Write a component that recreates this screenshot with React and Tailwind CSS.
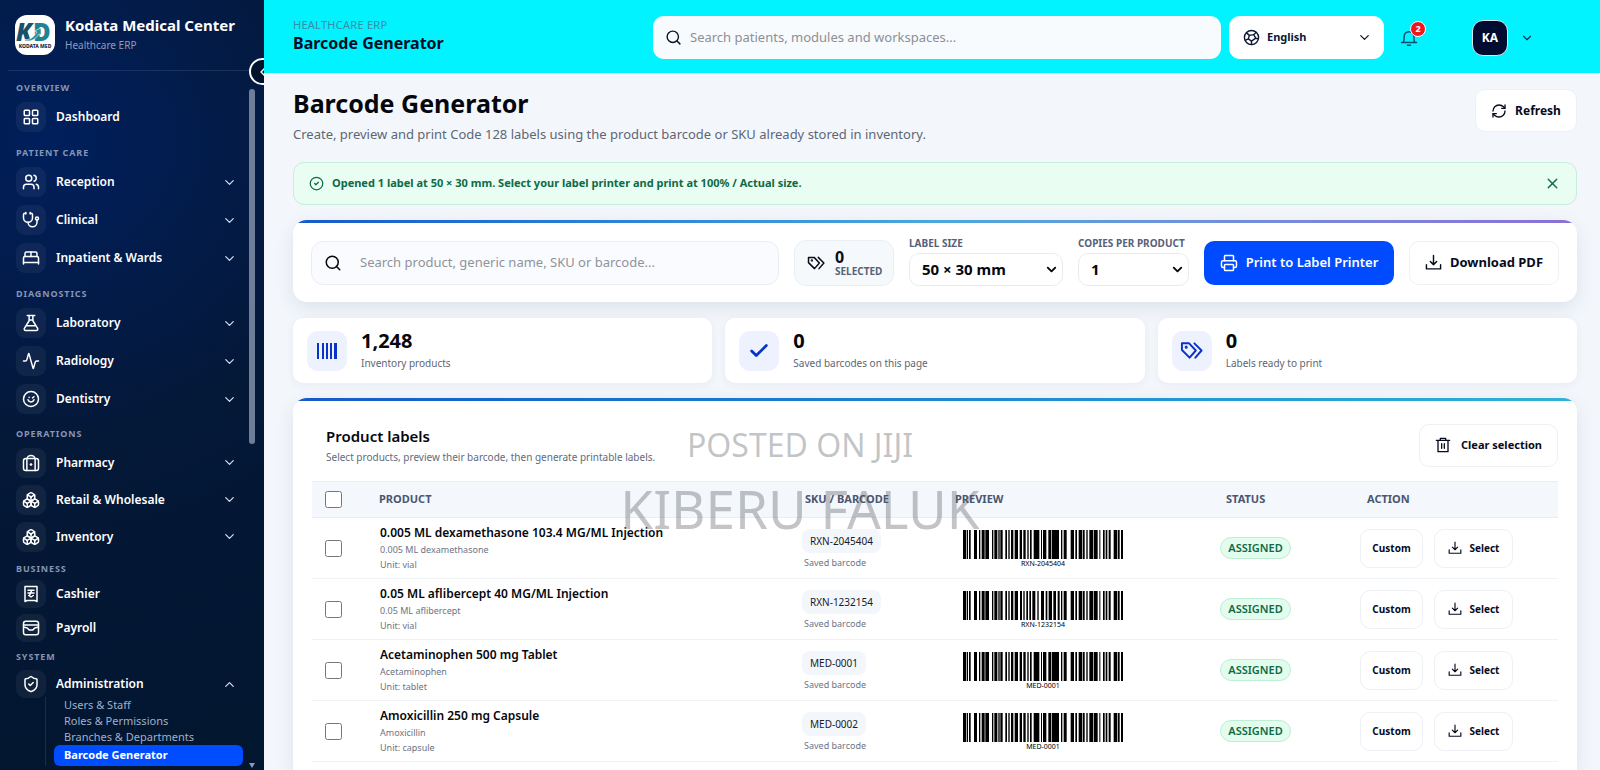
import React from 'react';
import {
    Activity, BedDouble, Boxes, Check, ChevronDown, ChevronLeft, ChevronUp, CircleCheck,
    LayoutGrid, Printer, RefreshCw, Search, ShieldCheck, Stethoscope, Users, X,
} from 'lucide-react';

const Svg = ({ size = 18, strokeWidth = 2, className, children }) => (
    <svg width={size} height={size} viewBox="0 0 24 24" fill="none" stroke="currentColor" strokeWidth={strokeWidth} strokeLinecap="round" strokeLinejoin="round" className={className} aria-hidden="true">
        {children}
    </svg>
);

const FlaskIcon = (props) => (
    <Svg {...props}>
        <path d="M7 2h10M9.5 2v7L3.2 19.2A1.9 1.9 0 0 0 4.8 22h14.4a1.9 1.9 0 0 0 1.6-2.8L14.5 9V2M9.5 8h5M6.5 15.5h11" />
    </Svg>
);

const FaceIcon = (props) => (
    <Svg {...props}>
        <circle cx="12" cy="12" r="10" />
        <path d="M8 13a4.2 4.2 0 0 0 8 0M9.5 9.5v.5M14 10.5l2-1.5" />
    </Svg>
);

const ReceiptIcon = (props) => (
    <Svg {...props}>
        <path d="M4 2h16v20l-3-1.500h-10L4 22z" />
        <path d="M8 7h8M8 10.500h8M9 14l3 2 3-2M13 7l-3 7" />
    </Svg>
);

const WalletIcon = (props) => (
    <Svg {...props}>
        <rect x="2" y="3" width="20" height="18" rx="3" />
        <path d="M2 8h20M3 11l4 1 2.500 2.500h5L17 12l4-1" />
    </Svg>
);

const PharmacyIcon = (props) => (
    <Svg {...props}>
        <rect x="2" y="6" width="20" height="16" rx="3" />
        <path d="M7 6a5 4 0 0 1 10 0M6.500 6v16M17.500 6v16M12 13v2M11 14h2" />
    </Svg>
);

const GlobeIcon = (props) => (
    <Svg {...props}>
        <circle cx="12" cy="12" r="10" />
        <path d="M5 5.5l4 3.5 6-1 3.5-3M9 9l-1.5 5L3 16M15 8l3 5 3.5 1M7.500 14l4.500 3 6-4M12 17v5" />
    </Svg>
);

const TagsIcon = (props) => (
    <Svg {...props}>
        <path d="M2 4.500h7.500l7 7.500-6.500 7.500-8-8zM15 4.500l7.500 7.500-6.500 7.500" />
        <circle cx="6.500" cy="8.500" r="0.600" fill="currentColor" />
    </Svg>
);

const DownloadIcon = (props) => (
    <Svg {...props}>
        <path d="M12 2v13M7.500 10.500L12 15l4.500-4.500M2 15v6h20v-6" />
    </Svg>
);

const TrashIcon = (props) => (
    <Svg {...props}>
        <path d="M2 5h20M8 5V2h8v3M4.500 5v17h15V5M10 10v7M14 10v7" />
    </Svg>
);

const BarsIcon = () => (
    <svg width="20" height="16" viewBox="0 0 20 16" fill="currentColor" aria-hidden="true">
        <path d="M0 0h2v16H0zM5 0h2v16H5zM9 0h2v16H9zM13 0h2v16h-2zM17 0h3v16h-3z" />
    </svg>
);

const NAV = [
    { label: 'Overview', kind: 'lg', items: [{ name: 'Dashboard', icon: LayoutGrid }] },
    {
        label: 'Patient Care', kind: 'lg', items: [
            { name: 'Reception', icon: Users, chevron: true },
            { name: 'Clinical', icon: Stethoscope, chevron: true },
            { name: 'Inpatient & Wards', icon: BedDouble, chevron: true },
        ],
    },
    {
        label: 'Diagnostics', kind: 'lg', items: [
            { name: 'Laboratory', icon: FlaskIcon, chevron: true },
            { name: 'Radiology', icon: Activity, chevron: true },
            { name: 'Dentistry', icon: FaceIcon, chevron: true },
        ],
    },
    {
        label: 'Operations', kind: 'md', items: [
            { name: 'Pharmacy', icon: PharmacyIcon, chevron: true },
            { name: 'Retail & Wholesale', icon: Boxes, chevron: true },
            { name: 'Inventory', icon: Boxes, chevron: true },
        ],
    },
    { label: 'Business', kind: 'sm', items: [{ name: 'Cashier', icon: ReceiptIcon }, { name: 'Payroll', icon: WalletIcon }] },
    {
        label: 'System', kind: 'xs', items: [
            { name: 'Administration', icon: ShieldCheck, children: ['Users & Staff', 'Roles & Permissions', 'Branches & Departments', 'Barcode Generator'] },
        ],
    },
];

const LABEL_SIZE = { lg: 'h-5 mt-[7px]', md: 'h-5 mt-1.5', sm: 'h-4 mt-1.5', xs: 'h-4 mt-1 mb-0.5' };
const ROW_SIZE = { lg: 'h-[38px]', md: 'h-[37px]', sm: 'h-[34px]', xs: 'h-[34px]' };
const TILE_SIZE = { lg: 'h-[30px]', md: 'h-[30px]', sm: 'h-7', xs: 'h-7' };

const PRODUCTS = [
    { name: '0.005 ML dexamethasone 103.4 MG/ML Injection', generic: '0.005 ML dexamethasone', unit: 'vial', sku: 'RXN-2045404', caption: 'RXN-2045404', pattern: 'a' },
    { name: '0.05 ML aflibercept 40 MG/ML Injection', generic: '0.05 ML aflibercept', unit: 'vial', sku: 'RXN-1232154', caption: 'RXN-1232154', pattern: 'b' },
    { name: 'Acetaminophen 500 mg Tablet', generic: 'Acetaminophen', unit: 'tablet', sku: 'MED-0001', caption: 'MED-0001', pattern: 'a' },
    { name: 'Amoxicillin 250 mg Capsule', generic: 'Amoxicillin', unit: 'capsule', sku: 'MED-0002', caption: 'MED-0001', pattern: 'a' },
];

// [start, end] of every bar, on a symbol 480 units wide
const BARS_HEAD = [
    [0, 9], [11, 15], [18, 23], [33, 42], [48, 52], [56, 65], [67, 78], [87, 91], [94, 103], [106, 110], [112, 119],
    [127, 132], [136, 140], [144, 151], [155, 165],
];
const BARS_TAIL = [
    [294, 298], [302, 311], [323, 333], [337, 342], [347, 358], [360, 365], [370, 374], [379, 390], [392, 404],
    [409, 412], [420, 425], [428, 433], [437, 443], [452, 463], [465, 470], [474, 480],
];
const BARS_MIDDLE = {
    a: [[170, 177], [181, 188], [193, 197], [201, 206], [212, 229], [234, 237], [240, 250], [256, 264], [266, 288]],
    b: [[171, 177], [181, 185], [190, 195], [199, 204], [208, 217], [223, 227], [234, 243], [248, 253], [257, 267], [271, 279], [284, 290]],
};

const Barcode = ({ pattern, caption }) => {
    const bars = [...BARS_HEAD, ...BARS_MIDDLE[pattern], ...BARS_TAIL];
    return (
        <div className="w-40 pt-0.5 flex flex-col items-center">
            <svg viewBox="0 0 480 29" preserveAspectRatio="none" className="w-40 h-[29px]" role="img" aria-label={caption}>
                {bars.map(([start, end]) => <rect key={start} x={start} y="0" width={end - start} height="29" fill="#000" />)}
            </svg>
            <span className="text-[7px] leading-[10px] text-black">{caption}</span>
        </div>
    );
};

const Logo = () => (
    <svg width="40" height="40" viewBox="0 0 40 40" className="shrink-0" aria-hidden="true">
        <rect width="40" height="40" rx="12" fill="#fff" />
        <text x="1" y="26" fontSize="24" fontWeight="900" fontStyle="italic" fill="#17516b">K</text>
        <text x="18" y="26" fontSize="24" fontWeight="900" fill="#1f8393">D</text>
        <path d="M8 24c6 2 10-1 14-7l-3-1 7-3v7l-2-1c-4 6-9 9-16 5z" fill="#2492a0" stroke="#fff" strokeWidth="0.600" />
        <text x="20" y="33" textAnchor="middle" fontSize="5" fontWeight="800" fill="#20263d">KODATA MED</text>
    </svg>
);

const NavItem = ({ item, kind }) => {
    const Icon = item.icon;
    return (
        <>
            <a href="#" className={`${ROW_SIZE[kind]} flex items-center gap-2.5 pl-4 pr-3`}>
                <span className={`${TILE_SIZE[kind]} w-[30px] shrink-0 rounded-[9px] bg-white/5 flex items-center justify-center text-white`}>
                    <Icon size={18} strokeWidth={2} />
                </span>
                <span className="flex-1 text-xs leading-5 font-semibold text-white">{item.name}</span>
                {item.chevron && <ChevronDown size={15} strokeWidth={2} className="text-[#d5deed]" />}
                {item.children && <ChevronUp size={15} strokeWidth={2} className="text-[#d5deed]" />}
            </a>
            {item.children && (
                <div className="-mt-1 ml-[45px] mr-1.5 pl-2 border-l border-white/10">
                    {item.children.map(name => (
                        name === 'Barcode Generator'
                            ? <a key={name} href="#" className="flex items-center h-[21px] rounded-md pl-2.5 bg-[#004dff] text-[11px] font-bold text-white">{name}</a>
                            : <a key={name} href="#" className="flex items-center h-4 pl-2.5 text-[11px] text-[#9fb0cb]">{name}</a>
                    ))}
                </div>
            )}
        </>
    );
};

const Sidebar = () => (
    <aside className="relative w-[264px] shrink-0 h-screen overflow-hidden flex flex-col bg-[radial-gradient(circle_at_20%_18%,#001f5c_0%,#041838_45%,#03162f_100%)]">
        <div className="h-[71px] mx-2 pl-[7px] flex items-center gap-2.5 border-b border-white/10 shrink-0">
            <Logo />
            <div>
                <p className="text-[15px] leading-5 font-bold text-white whitespace-nowrap">Kodata Medical Center</p>
                <p className="text-[10px] leading-5 text-[#8d9dbb]">Healthcare ERP</p>
            </div>
        </div>
        <div className="flex-1 min-h-0 flex">
            <nav className="w-[249px] overflow-hidden">
                {NAV.map(section => (
                    <div key={section.label}>
                        <h2 className={`${LABEL_SIZE[section.kind]} flex items-center pl-4 text-[9px] font-bold uppercase tracking-widest text-[#8495b5]`}>{section.label}</h2>
                        {section.items.map(item => <NavItem key={item.name} item={item} kind={section.kind} />)}
                    </div>
                ))}
            </nav>
            <div className="w-1.5 flex flex-col justify-between pt-[18px] pb-0.5">
                <div className="h-[355px] rounded-full bg-[#6f7e98]" />
                <svg width="6" height="5" viewBox="0 0 6 5" fill="#8d99ad" aria-hidden="true"><path d="M0 0h6L3 5z" /></svg>
            </div>
        </div>
        <button aria-label="Collapse sidebar" className="absolute top-[58px] left-[249px] size-[27px] rounded-full border-2 border-white bg-[#03132d] text-white flex items-center pl-1">
            <ChevronLeft size={16} strokeWidth={2} className="shrink-0" />
        </button>
    </aside>
);

const Header = () => (
    <header className="h-[73px] pt-0.5 pl-[29px] pr-[66px] flex items-center bg-[#00f3ff]">
        <div className="flex-1 pb-1.5">
            <p className="text-[11px] leading-4 uppercase tracking-wide text-[#3a8ca4]">Healthcare ERP</p>
            <p className="text-base leading-5 font-bold text-[#020c25]">Barcode Generator</p>
        </div>
        <label className="w-[568px] h-[43px] flex items-center gap-2 px-3 rounded-[11px] bg-[#f8fbfe]">
            <Search size={17} strokeWidth={2} className="shrink-0 text-[#0b1228]" />
            <input aria-label="Search patients, modules and workspaces" placeholder="Search patients, modules and workspaces..." className="flex-1 bg-transparent outline-none text-[13px] text-slate-800 placeholder:text-[#8b8f96]" />
        </label>
        <div className="relative ml-2">
            <GlobeIcon size={17} className="absolute left-3.5 top-[13px] text-[#0b1733] pointer-events-none" />
            <select aria-label="Language" className="block appearance-none w-[155px] h-[43px] pl-[38px] rounded-[11px] bg-white text-[11px] font-bold text-[#0b1733]">
                <option>English</option>
            </select>
            <ChevronDown size={15} className="absolute right-3 top-3.5 text-[#0b1733] pointer-events-none" />
        </div>
        <button aria-label="Notifications" className="relative ml-4 size-[18px] text-[#075070]">
            <Svg size={18} strokeWidth={2}><path d="M2 18h20M4.500 18c1-2 1-4 1-8a6.500 6.500 0 0 1 13 0c0 4 0 6 1 8M10 21.500h4" /></Svg>
            <span className="absolute -top-2 left-[10px] size-4 rounded-full border border-white bg-[#ef1620] text-[9px] leading-none font-bold text-white flex items-center justify-center">2</span>
        </button>
        <button className="ml-[54px] flex items-center gap-3 text-[#03304f]">
            <span className="size-9 rounded-[11px] border border-[#d6e6f2] bg-[#020b30] text-xs font-bold text-white flex items-center justify-center">KA</span>
            <ChevronDown size={14} strokeWidth={2} />
        </button>
    </header>
);

const OUTLINE_BUTTON = 'flex items-center justify-center border border-[#edf0f4] bg-white font-bold text-[#060b1e] whitespace-nowrap';

const Toolbar = () => (
    <section className="mt-[15px] shrink-0 rounded-[14px] overflow-hidden bg-white shadow-[0_6px_18px_rgba(30,50,80,0.10)]">
        <div className="h-[3px] bg-linear-to-r from-[#1759c9] via-[#49a8dc] to-[#8a70d6]" />
        <div className="h-[79px] px-[18px] flex items-center gap-[15px]">
            <label className="flex-1 h-11 flex items-center gap-[18px] px-3 rounded-xl border border-[#e9edf3] bg-[#fafbfe]">
                <Search size={18} strokeWidth={2} className="shrink-0 text-[#05070d]" />
                <input aria-label="Search product" placeholder="Search product, generic name, SKU or barcode..." className="flex-1 bg-transparent outline-none text-[13px] text-slate-800 placeholder:text-[#8f9399]" />
            </label>
            <div className="w-[100px] h-[46px] pl-3 flex items-center gap-2.5 rounded-xl border border-[#eaeef4] bg-[#f6f9fc]">
                <TagsIcon size={18} className="text-[#0a0d18]" />
                <div>
                    <p className="text-base leading-4 font-bold text-[#0a0d18]">0</p>
                    <p className="text-[10px] leading-3 font-bold text-[#56617a]">SELECTED</p>
                </div>
            </div>
            <div className="pb-0.5">
                <label htmlFor="size" className="block h-4 text-[10px] leading-3 font-bold text-[#56617a]">LABEL SIZE</label>
                <div className="relative">
                    <select id="size" className="block appearance-none w-[154px] h-[33px] pl-3 rounded-[10px] border border-[#e8ecf2] bg-white text-[15px] font-bold text-[#05070d]">
                        <option>50 × 30 mm</option>
                    </select>
                    <ChevronDown size={15} strokeWidth={3} className="absolute right-1 top-[9px] text-[#05070d] pointer-events-none" />
                </div>
            </div>
            <div className="pb-0.5">
                <label htmlFor="copies" className="block h-4 text-[10px] leading-3 font-bold text-[#56617a]">COPIES PER PRODUCT</label>
                <div className="relative">
                    <select id="copies" className="block appearance-none w-[111px] h-[33px] pl-3 rounded-[10px] border border-[#e8ecf2] bg-white text-[15px] font-bold text-[#05070d]">
                        <option>1</option>
                    </select>
                    <ChevronDown size={15} strokeWidth={3} className="absolute right-1 top-[9px] text-[#05070d] pointer-events-none" />
                </div>
            </div>
            <button className="w-[190px] h-11 flex items-center justify-center gap-2 rounded-[10px] bg-[#004bff] text-[13px] font-semibold text-white whitespace-nowrap">
                <Printer size={18} strokeWidth={2} /> Print to Label Printer
            </button>
            <button className={`${OUTLINE_BUTTON} w-[150px] h-11 gap-2 rounded-[10px] text-[13px]`}>
                <DownloadIcon size={17} /> Download PDF
            </button>
        </div>
    </section>
);

const STATS = [
    { value: '1,248', label: 'Inventory products', icon: <BarsIcon /> },
    { value: '0', label: 'Saved barcodes on this page', icon: <Check size={22} strokeWidth={3} /> },
    { value: '0', label: 'Labels ready to print', icon: <TagsIcon size={23} strokeWidth={2} /> },
];

const ProductTable = () => (
    <section className="mt-[15px] rounded-t-[14px] overflow-hidden bg-white shadow-[0_6px_18px_rgba(30,50,80,0.10)] flex-1">
        <div className="h-[3px] bg-linear-to-r from-[#1759c9] to-[#2fb3d4]" />
        <div className="px-[19px]">
            <div className="h-20 pt-2 pl-3.5 flex items-center justify-between">
                <div>
                    <h2 className="text-[15px] leading-6 font-semibold text-[#05070d]">Product labels</h2>
                    <p className="text-[10px] leading-[18px] text-[#626b7c]">Select products, preview their barcode, then generate printable labels.</p>
                </div>
                <button className={`${OUTLINE_BUTTON} w-[139px] h-[43px] gap-2.5 rounded-[10px] text-[11px]`}>
                    <TrashIcon size={16} strokeWidth={2} /> Clear selection
                </button>
            </div>
            <table className="w-full table-fixed text-left">
                <colgroup>
                    <col className="w-[55px]" />
                    <col />
                    <col className="w-[150px]" />
                    <col className="w-[271px]" />
                    <col className="w-[141px]" />
                    <col className="w-[203px]" />
                </colgroup>
                <thead>
                    <tr className="h-9 bg-[#f4f8fc] border-y border-[#e6edf4] text-[11px] text-[#4a5570]">
                        <th className="pl-[13px]"><input type="checkbox" aria-label="Select all" className="block size-[17px]" /></th>
                        <th className="pl-3 font-bold">PRODUCT</th>
                        <th className="pl-3 font-bold">SKU / BARCODE</th>
                        <th className="pl-3 font-bold">PREVIEW</th>
                        <th className="pl-3 font-bold">STATUS</th>
                        <th className="pl-3 font-bold">ACTION</th>
                    </tr>
                </thead>
                <tbody>
                    {PRODUCTS.map(product => (
                        <tr key={product.sku} className="h-[61px] border-b border-[#f0f3f6]">
                            <td className="pl-[13px]"><input type="checkbox" aria-label={product.name} className="block size-[17px]" /></td>
                            <td className="pl-[13px]">
                                <p className="text-xs leading-[18px] font-semibold text-[#05070d]">{product.name}</p>
                                <p className="text-[9px] leading-[15px] text-[#6c7485]">{product.generic}</p>
                                <p className="text-[9px] leading-[15px] text-[#6c7485]">Unit: {product.unit}</p>
                            </td>
                            <td className="pt-1 pl-[9px]">
                                <span className="flex items-center w-fit h-6 px-2 rounded-lg bg-[#f3f6fa] text-[10px] text-[#171c2c]">{product.sku}</span>
                                <p className="pt-0.5 pl-0.5 text-[9px] leading-4 text-[#6c7485]">Saved barcode</p>
                            </td>
                            <td className="pl-5"><Barcode pattern={product.pattern} caption={product.caption} /></td>
                            <td className="pl-1.5">
                                <span className="flex items-center justify-center w-[71px] h-[22px] rounded-full border border-[#bfeed6] bg-[#e2fcee] text-[11px] font-semibold text-[#0d6b45]">ASSIGNED</span>
                            </td>
                            <td className="pl-[5px]">
                                <div className="flex gap-[11px]">
                                    <button className={`${OUTLINE_BUTTON} w-[63px] h-[39px] rounded-[10px] text-[10px]`}>Custom</button>
                                    <button className={`${OUTLINE_BUTTON} w-[79px] h-[39px] gap-2 rounded-[10px] text-[10px]`}>
                                        <DownloadIcon size={14} /> Select
                                    </button>
                                </div>
                            </td>
                        </tr>
                    ))}
                </tbody>
            </table>
        </div>
    </section>
);

export default function App() {
    return (
        <div className="relative h-screen overflow-hidden flex bg-[#f3f7fc] font-['Noto_Sans',sans-serif]">
            <Sidebar />
            <div className="flex-1 min-w-0 flex flex-col">
                <Header />
                <main className="flex-1 min-h-0 pl-[29px] pr-[23px] pt-4 flex flex-col">
                    <div className="flex items-start justify-between">
                        <div>
                            <h1 className="text-[25px] leading-7 font-bold text-[#05070d]">Barcode Generator</h1>
                            <p className="mt-[7px] text-[13px] leading-5 text-[#5d6675]">Create, preview and print Code 128 labels using the product barcode or SKU already stored in inventory.</p>
                        </div>
                        <button className={`${OUTLINE_BUTTON} w-[102px] h-[43px] gap-2 rounded-[10px] text-xs`}>
                            <RefreshCw size={16} strokeWidth={2} /> Refresh
                        </button>
                    </div>
                    <div role="status" className="mt-[18px] h-[43px] shrink-0 px-[15px] flex items-center gap-2 rounded-[11px] border border-[#c5eedb] bg-[#e9fdf3] text-[#0d6b45]">
                        <CircleCheck size={15} strokeWidth={2} />
                        <p className="flex-1 text-[11px] font-bold">Opened 1 label at 50 × 30 mm. Select your label printer and print at 100% / Actual size.</p>
                        <button aria-label="Dismiss"><X size={17} strokeWidth={2} /></button>
                    </div>
                    <Toolbar />
                    <div className="mt-4 shrink-0 grid grid-cols-3 gap-[13px]">
                        {STATS.map(stat => (
                            <div key={stat.label} className="h-[65px] px-3.5 flex items-center gap-3.5 rounded-[10px] bg-white shadow-[0_2px_8px_rgba(30,50,80,0.06)]">
                                <span className="size-10 shrink-0 rounded-[11px] bg-[#eef2fe] text-[#0a33c8] flex items-center justify-center">{stat.icon}</span>
                                <div>
                                    <p className="text-xl leading-6 font-bold text-[#05070d]">{stat.value}</p>
                                    <p className="text-[10px] leading-5 text-[#5d6675]">{stat.label}</p>
                                </div>
                            </div>
                        ))}
                    </div>
                    <ProductTable />
                </main>
            </div>
            <div className="absolute inset-x-0 top-[420px] flex flex-col items-center text-[#50565c]/35 pointer-events-none whitespace-nowrap">
                <span className="text-[32px] leading-[50px]">POSTED ON JIJI</span>
                <span className="text-[53px] leading-[78px]">KIBERU FALUK</span>
            </div>
        </div>
    );
}
